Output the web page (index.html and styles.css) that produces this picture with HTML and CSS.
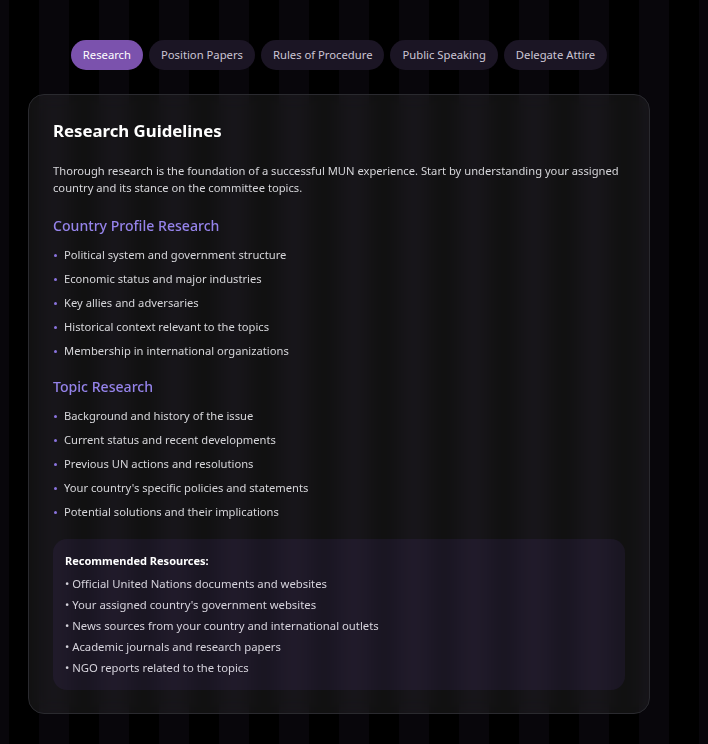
FILE: index.html
```html
<!DOCTYPE html>
<html>
<head>
<meta charset="utf-8">
<link rel="stylesheet" href="styles.css">
</head>
<body>
<div class="page">
  <nav class="tabs">
    <button class="tab active">Research</button>
    <button class="tab">Position Papers</button>
    <button class="tab">Rules of Procedure</button>
    <button class="tab">Public Speaking</button>
    <button class="tab">Delegate Attire</button>
  </nav>
  <section class="card">
    <h2 class="title">Research Guidelines</h2>
    <p class="intro">Thorough research is the foundation of a successful MUN experience. Start by understanding your assigned country and its stance on the committee topics.</p>
    <h3 class="subtitle">Country Profile Research</h3>
    <ul class="list">
      <li>Political system and government structure</li>
      <li>Economic status and major industries</li>
      <li>Key allies and adversaries</li>
      <li>Historical context relevant to the topics</li>
      <li>Membership in international organizations</li>
    </ul>
    <h3 class="subtitle">Topic Research</h3>
    <ul class="list">
      <li>Background and history of the issue</li>
      <li>Current status and recent developments</li>
      <li>Previous UN actions and resolutions</li>
      <li>Your country's specific policies and statements</li>
      <li>Potential solutions and their implications</li>
    </ul>
    <div class="resources">
      <p class="res-title">Recommended Resources:</p>
      <p class="res-item">• Official United Nations documents and websites</p>
      <p class="res-item">• Your assigned country's government websites</p>
      <p class="res-item">• News sources from your country and international outlets</p>
      <p class="res-item">• Academic journals and research papers</p>
      <p class="res-item">• NGO reports related to the topics</p>
    </div>
  </section>
</div>
</body>
</html>
```
FILE: styles.css
```css
html, body {
  margin: 0;
  padding: 0;
}
body {
  min-height: 744px;
  background-color: #000;
  background-image: linear-gradient(90deg, #08060b 0 30px, transparent 30px 60px);
  background-size: 60px 100%;
  background-position: 39px 0;
  font-family: "Noto Sans", "Open Sans", sans-serif;
  color: #e4e4e7;
}
.page {
  width: 622px;
  margin-left: 28px;
  padding-top: 40px;
}
.tabs {
  display: flex;
  justify-content: center;
  gap: 6px;
  margin-bottom: 24px;
}
.tab {
  height: 30px;
  padding: 0 12px;
  border: none;
  border-radius: 15px;
  background: #1b1524;
  color: #cbc5d4;
  font-family: inherit;
  font-size: 11.25px;
  line-height: 30px;
}
.tab.active {
  background: #7b52ad;
  color: #ffffff;
}
.card {
  box-sizing: border-box;
  border: 1px solid #2a2a2f;
  border-radius: 16px;
  background: rgba(255, 255, 255, 0.065);
  backdrop-filter: blur(10px);
  padding: 24px 24px 23px;
}
.title {
  margin: 0 0 19px;
  font-size: 16.8px;
  line-height: 24px;
  font-weight: 700;
  color: #ffffff;
}
.intro {
  margin: 0 0 19px;
  font-size: 11.2px;
  line-height: 17px;
  color: #d6d6da;
}
.subtitle {
  margin: 0 0 6px;
  font-size: 14.1px;
  line-height: 22px;
  font-weight: 500;
  color: #9583ea;
}
.list {
  list-style: none;
  margin: 0 0 13px;
  padding: 0;
}
.list li {
  position: relative;
  padding-left: 11px;
  font-size: 11.2px;
  line-height: 24px;
  color: #d6d6da;
}
.list li::before {
  content: "";
  position: absolute;
  left: 1px;
  top: 11px;
  width: 3px;
  height: 3px;
  border-radius: 50%;
  background: #8b74e0;
}
.resources {
  margin-top: 15px;
  border-radius: 14px;
  background: rgba(139, 92, 246, 0.08);
  padding: 12px 12px 12px;
}
.res-title {
  margin: 0 0 2px;
  font-size: 11px;
  line-height: 20px;
  font-weight: 700;
  color: #ffffff;
}
.res-item {
  margin: 0;
  font-size: 11.3px;
  line-height: 21px;
  color: #d6d3dc;
}
```
